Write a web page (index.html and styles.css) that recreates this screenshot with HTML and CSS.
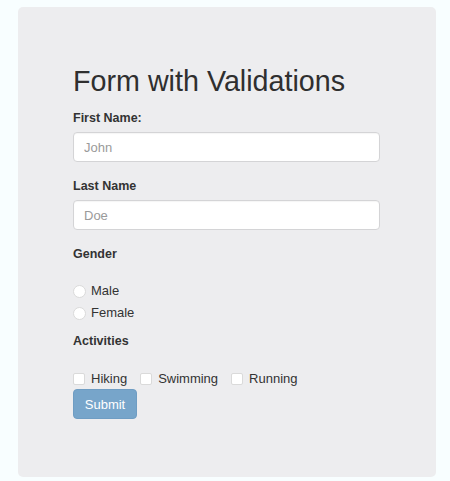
FILE: index.html
```html
<!DOCTYPE html>
<html>
<head>
<meta charset="utf-8">
<link rel="stylesheet" href="styles.css">
</head>
<body>
<div class="card">
  <form class="form">
    <h1 class="title">Form with Validations</h1>
    <label class="label">First Name:</label>
    <input class="control" type="text" placeholder="John">
    <label class="label">Last Name</label>
    <input class="control" type="text" placeholder="Doe">
    <label class="label">Gender</label>
    <div class="radios">
      <label class="opt"><input class="radio" type="radio" name="g"><span>Male</span></label>
      <label class="opt"><input class="radio" type="radio" name="g"><span>Female</span></label>
    </div>
    <label class="label">Activities</label>
    <div class="checks">
      <label class="opt"><input class="check" type="checkbox"><span>Hiking</span></label>
      <label class="opt"><input class="check" type="checkbox"><span>Swimming</span></label>
      <label class="opt"><input class="check" type="checkbox"><span>Running</span></label>
    </div>
    <button class="btn" type="button">Submit</button>
  </form>
</div>
</body>
</html>
```
FILE: styles.css
```css
html, body {
  margin: 0;
  padding: 0;
  background: #f8feff;
  font-family: "Liberation Sans", Arial, sans-serif;
  color: #333;
}
body {
  padding: 7px 0 0 18px;
  height: 481px;
  box-sizing: border-box;
}
.card {
  width: 418px;
  height: 470px;
  background: #ededef;
  border-radius: 5px;
  box-sizing: border-box;
  padding: 59px 56px 0 55px;
}
.form {
  display: flex;
  flex-direction: column;
  align-items: flex-start;
}
.title {
  margin: 0;
  font-size: 28.7px;
  font-weight: 400;
  line-height: 31px;
  color: #2f2f2f;
}
.label {
  display: block;
  font-size: 12.5px;
  font-weight: 700;
  line-height: 16px;
  margin-top: 13px;
  color: #333;
}
.control {
  margin-top: 6px;
  width: 307px;
  height: 30px;
  box-sizing: border-box;
  border: 1px solid #d4d4d6;
  border-radius: 4px;
  background: #fff;
  padding: 0 10px;
  font: 13px "Liberation Sans", Arial, sans-serif;
  color: #333;
  box-shadow: inset 0 1px 1px rgba(0,0,0,0.04);
}
.control::placeholder { color: #9a9a9a; }
.control + .label { margin-top: 16px; }
.radios {
  margin-top: 18px;
  display: flex;
  flex-direction: column;
}
.opt {
  display: flex;
  align-items: center;
  font-size: 13px;
  line-height: 22px;
  color: #333;
}
.radio, .check {
  appearance: none;
  -webkit-appearance: none;
  margin: 0 5px 0 0;
  background: #fff;
  border: 1px solid #dadada;
  box-sizing: border-box;
}
.radio {
  width: 13px;
  height: 13px;
  border-radius: 50%;
}
.radios + .label { margin-top: 9px; }
.checks {
  margin-top: 21px;
  display: flex;
  gap: 13px;
}
.checks .opt { line-height: 18px; }
.check {
  width: 12px;
  height: 12px;
  border-radius: 2px;
  margin-right: 6px;
}
.btn {
  margin-top: 1px;
  width: 64px;
  height: 30px;
  border: 1px solid #6f9dc3;
  border-radius: 4px;
  background: #77a5ca;
  color: #fff;
  font: 13px "Liberation Sans", Arial, sans-serif;
  padding: 0;
}
```
